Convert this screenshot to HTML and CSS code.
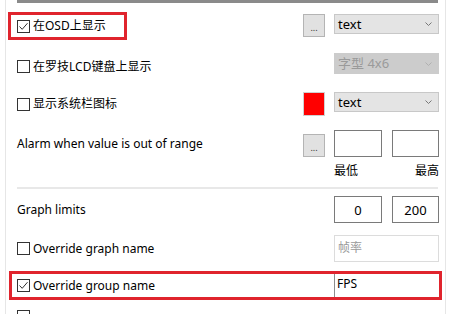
FILE: index.html
```html
<!DOCTYPE html>
<html lang="zh">
<head>
    <meta charset="UTF-8">
    <title>OSD Settings</title>
    <link rel="stylesheet" href="styles.css">
</head>
<body>
    <div class="panel">
        <div class="topbar"></div>

        <!-- OSD display -->
        <div class="row row-osd">
            <div class="cell label-cell marked">
                <span class="check on"><svg viewBox="0 0 11 11"><polyline points="1.5,5.5 4.2,8.3 9.5,2.2"/></svg></span>
                <span>在OSD上显示</span>
            </div>
            <button class="dots">...</button>
            <div class="select">text<svg class="arrow" viewBox="0 0 7 4"><polyline points="0.5,0.5 3.5,3.5 6.5,0.5"/></svg></div>
        </div>

        <!-- LCD display -->
        <div class="row row-lcd">
            <div class="cell label-cell">
                <span class="check"></span>
                <span>在罗技LCD键盘上显示</span>
            </div>
            <div></div>
            <div class="select disabled">字型 4x6<svg class="arrow" viewBox="0 0 7 4"><polyline points="0.5,0.5 3.5,3.5 6.5,0.5"/></svg></div>
        </div>

        <!-- Tray icon -->
        <div class="row row-tray">
            <div class="cell label-cell">
                <span class="check"></span>
                <span>显示系统栏图标</span>
            </div>
            <div class="swatch"></div>
            <div class="select">text<svg class="arrow" viewBox="0 0 7 4"><polyline points="0.5,0.5 3.5,3.5 6.5,0.5"/></svg></div>
        </div>

        <!-- Alarm -->
        <div class="row row-alarm">
            <div class="cell">Alarm when value is out of range</div>
            <button class="dots">...</button>
            <div class="pair">
                <input class="box" type="text">
                <input class="box" type="text">
            </div>
        </div>
        <div class="row row-captions">
            <div></div>
            <div></div>
            <div class="pair captions">
                <span>最低</span>
                <span>最高</span>
            </div>
        </div>

        <div class="separator"></div>

        <!-- Graph limits -->
        <div class="row row-limits">
            <div class="cell">Graph limits</div>
            <div></div>
            <div class="pair">
                <input class="box" type="text" value="0">
                <input class="box" type="text" value="200">
            </div>
        </div>

        <div class="row row-graphname">
            <div class="cell label-cell">
                <span class="check"></span>
                <span>Override graph name</span>
            </div>
            <div></div>
            <input class="wide disabled" type="text" value="帧率" disabled>
        </div>

        <div class="row row-groupname marked-row">
            <div class="cell label-cell">
                <span class="check on"><svg viewBox="0 0 11 11"><polyline points="1.5,5.5 4.2,8.3 9.5,2.2"/></svg></span>
                <span>Override group name</span>
            </div>
            <div></div>
            <input class="wide flat" type="text" value="FPS">
        </div>

        <div class="row row-next">
            <div class="cell label-cell">
                <span class="check"></span>
            </div>
        </div>
    </div>
</body>
</html>
```

FILE: styles.css
```css
html, body {
    margin: 0;
    padding: 0;
    background-color: #ffffff;
    height: 314px;
    overflow: hidden;
}

body {
    font-family: "Noto Sans", "Noto Sans CJK SC", sans-serif;
    font-size: 12px;
    color: #000;
}

.panel {
    margin-left: 5px;
    width: 441px;
    height: 314px;
    overflow: hidden;
    border-left: 1px solid #e6e6e6;
    border-right: 1px solid #e6e6e6;
    padding: 0 6px 0 11px;
    box-sizing: border-box;
}

.topbar {
    height: 3px;
    background-color: #8a8a8a;
    margin-right: 1px;
}

.row {
    display: grid;
    grid-template-columns: 1fr 22px 105px;
    column-gap: 9px;
    align-items: center;
}

.cell {
    white-space: nowrap;
    line-height: 16px;
}

.label-cell {
    display: flex;
    align-items: center;
    gap: 3px;
    position: relative;
}

.check {
    width: 13px;
    height: 13px;
    border: 1px solid #333;
    box-sizing: border-box;
    background: #fff;
    display: inline-flex;
    align-items: center;
    justify-content: center;
}

.check svg {
    width: 11px;
    height: 11px;
    fill: none;
    stroke: #333;
    stroke-width: 1;
}

/* red highlight frames */
.marked::before {
    content: "";
    position: absolute;
    left: -9px;
    top: -6px;
    width: 119px;
    height: 28px;
    border: 3px solid #e0242d;
    box-sizing: border-box;
}

.marked-row {
    position: relative;
}

.marked-row::before {
    content: "";
    position: absolute;
    left: -8px;
    right: -3px;
    top: -3px;
    bottom: -3px;
    border: 3px solid #e0242d;
    pointer-events: none;
}

.dots {
    width: 22px;
    height: 23px;
    padding: 0 0 4px;
    margin: 0;
    border: 1px solid #b4b4b4;
    background-color: #e1e1e1;
    font-family: "Noto Sans", sans-serif;
    font-size: 9px;
    line-height: 9px;
    color: #333;
    display: flex;
    align-items: flex-end;
    justify-content: center;
    box-sizing: border-box;
}

.select {
    height: 20px;
    border: 1px solid #c8c8c8;
    background-color: #e4e4e4;
    box-sizing: border-box;
    padding: 0 0 0 3px;
    line-height: 17px;
    display: flex;
    justify-content: space-between;
    align-items: center;
    align-self: start;
    font-size: 13px;
}

.select .arrow {
    width: 7px;
    height: 4px;
    margin-right: 6px;
    fill: none;
    stroke: #777;
    stroke-width: 1;
}

.select.disabled {
    height: 21px;
    background-color: #cccccc;
    border-color: #cccccc;
    color: #9a9a9a;
}

.select.disabled .arrow {
    stroke: #b0b0b0;
}

.swatch {
    width: 22px;
    height: 24px;
    background-color: #ff0000;
    border: 1px solid #d0d0d0;
    box-sizing: border-box;
}

.pair {
    display: flex;
    justify-content: space-between;
}

.box {
    width: 48px;
    height: 27px;
    border: 1px solid #7a7a7a;
    box-sizing: border-box;
    padding: 0;
    margin: 0;
    font-family: "Noto Sans", sans-serif;
    font-size: 13px;
    text-align: center;
    color: #000;
    background: #fff;
    outline: none;
}

.box + .box {
    width: 47px;
}

.captions {
    font-size: 12px;
    line-height: 16px;
}

.wide {
    width: 105px;
    height: 27px;
    box-sizing: border-box;
    margin: 0;
    padding: 0 3px;
    font-family: "Noto Sans", "Noto Sans CJK SC", sans-serif;
    font-size: 12px;
    background: #fff;
    outline: none;
}

.wide.disabled {
    border: 1px solid #dcdcdc;
    color: #9a9a9a;
    align-self: start;
    padding-bottom: 4px;
}

.wide.flat {
    height: 23px;
    border: none;
    border-left: 1px solid #8c8c8c;
    padding: 0 2px 5px;
    color: #000;
}

.separator {
    height: 2px;
    background-color: #e8e8e8;
    margin: 6px 1px 0 0;
}

.row-osd { height: 24px; margin-top: 11px; }
.row-osd .dots { align-self: start; }
.row-lcd { height: 27px; margin-top: 15px; }
.row-tray { height: 24px; margin-top: 12px; }
.row-alarm { height: 27px; margin-top: 14px; }
.row-alarm .dots { align-self: end; }
.row-captions { height: 20px; margin-top: 4px; }
.row-limits { height: 27px; margin-top: 7px; }
.row-graphname { height: 27px; margin-top: 12px; }
.row-groupname { height: 23px; margin-top: 12px; }
.row-next { height: 14px; margin-top: 13px; align-items: start; }
```
